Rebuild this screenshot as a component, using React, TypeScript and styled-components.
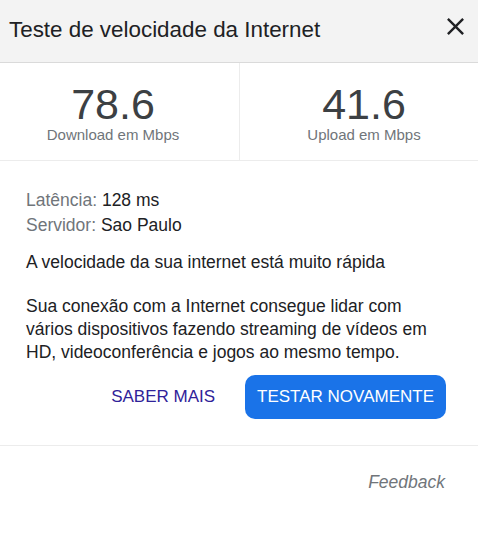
import styled, { createGlobalStyle } from "styled-components";

const GlobalStyle = createGlobalStyle`
  body {
    margin: 0;
    background: #fff;
    font-family: "Liberation Sans", Arial, sans-serif;
  }
`;

const Panel = styled.div`
  width: 478px;
  background: #fff;
`;

const Header = styled.header`
  display: flex;
  align-items: center;
  justify-content: space-between;
  height: 59px;
  padding: 0 8px 3px 9px;
  background: #f3f3f3;
  border-bottom: 1px solid #dadada;
`;

const Title = styled.h1`
  margin: 0;
  font-size: 22.4px;
  font-weight: 400;
  color: #202124;
`;

const CloseButton = styled.button`
  display: flex;
  margin: 0 0 6px;
  padding: 0;
  border: none;
  background: transparent;
  color: #202124;
  cursor: pointer;
`;

const StatsRow = styled.div`
  display: grid;
  grid-template-columns: 240px 1fr;
  border-bottom: 1px solid #ececec;
`;

const Stat = styled.div<{ $first?: boolean }>`
  display: flex;
  flex-direction: column;
  align-items: center;
  padding: ${(p) => (p.$first ? "19px 13px 16px 0" : "19px 0 16px 10px")};
  border-right: ${(p) => (p.$first ? "1px solid #ececec" : "none")};
`;

const Value = styled.div`
  font-size: 43px;
  line-height: 44px;
  color: #3c4043;
`;

const Caption = styled.div`
  font-size: 15px;
  line-height: 18px;
  color: #70757a;
`;

const Details = styled.section`
  padding: 27px 32px 26px 26px;
  border-bottom: 1px solid #ececec;
  font-size: 17.5px;
  color: #202124;
`;

const InfoLine = styled.div`
  line-height: 25px;
`;

const InfoLabel = styled.span`
  color: #70757a;
`;

const Text = styled.p<{ $gap: number }>`
  margin: ${(p) => p.$gap}px 0 0;
  line-height: 23px;
`;

const Actions = styled.div`
  display: flex;
  justify-content: flex-end;
  gap: 18px;
  margin-top: 11px;
`;

const ActionButton = styled.button<{ $primary?: boolean }>`
  height: 44px;
  padding: 0 12px;
  border: none;
  border-radius: 10px;
  font-family: inherit;
  font-size: 17px;
  background: ${(p) => (p.$primary ? "#1a73e8" : "transparent")};
  color: ${(p) => (p.$primary ? "#fff" : "#2f2299")};
  cursor: pointer;
`;

const Footer = styled.footer`
  padding: 26px 33px 0;
  text-align: right;
`;

const FeedbackLink = styled.a`
  font-size: 17.5px;
  line-height: 20px;
  font-style: italic;
  color: #70757a;
  cursor: pointer;
`;

export default function App() {
  return (
    <>
      <GlobalStyle />
      <Panel>
        <Header>
          <Title>Teste de velocidade da Internet</Title>
          <CloseButton aria-label="Fechar">
            <svg width="29" height="29" viewBox="0 0 24 24" fill="currentColor">
              <path d="M19 6.41L17.59 5 12 10.59 6.41 5 5 6.41 10.59 12 5 17.59 6.41 19 12 13.41 17.59 19 19 17.59 13.41 12z" />
            </svg>
          </CloseButton>
        </Header>

        <StatsRow>
          <Stat $first>
            <Value>78.6</Value>
            <Caption>Download em Mbps</Caption>
          </Stat>
          <Stat>
            <Value>41.6</Value>
            <Caption>Upload em Mbps</Caption>
          </Stat>
        </StatsRow>

        <Details>
          <InfoLine>
            <InfoLabel>Latência:</InfoLabel> 128 ms
          </InfoLine>
          <InfoLine>
            <InfoLabel>Servidor:</InfoLabel> Sao Paulo
          </InfoLine>
          <Text $gap={13}>A velocidade da sua internet está muito rápida</Text>
          <Text $gap={21}>
            Sua conexão com a Internet consegue lidar com vários dispositivos
            fazendo streaming de vídeos em HD, videoconferência e jogos ao
            mesmo tempo.
          </Text>
          <Actions>
            <ActionButton>SABER MAIS</ActionButton>
            <ActionButton $primary>TESTAR NOVAMENTE</ActionButton>
          </Actions>
        </Details>

        <Footer>
          <FeedbackLink>Feedback</FeedbackLink>
        </Footer>
      </Panel>
    </>
  );
}
